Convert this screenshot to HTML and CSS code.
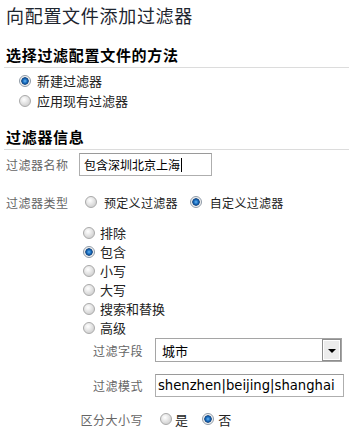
FILE: index.html
```html
<!DOCTYPE html>
<html lang="zh-CN">
<head>
<meta charset="utf-8">
<title>向配置文件添加过滤器</title>
<link rel="stylesheet" href="styles.css">
</head>
<body>
<div class="page">
  <h1 class="title">向配置文件添加过滤器</h1>

  <section class="sec">
    <h2 class="sec-head first">选择过滤配置文件的方法</h2>
    <div class="method-list">
      <div class="opt"><span class="radio on"></span><span class="opt-text">新建过滤器</span></div>
      <div class="opt"><span class="radio"></span><span class="opt-text">应用现有过滤器</span></div>
    </div>
  </section>

  <section class="sec">
    <h2 class="sec-head second">过滤器信息</h2>

    <div class="form-row name-row">
      <span class="lbl">过滤器名称</span>
      <div class="textbox name-box"><span class="tb-text">包含深圳北京上海</span><span class="caret"></span></div>
    </div>

    <div class="form-row type-row">
      <span class="lbl">过滤器类型</span>
      <div class="inline-radios">
        <span class="radio"></span><span class="ir-text">预定义过滤器</span>
        <span class="radio on gap"></span><span class="ir-text">自定义过滤器</span>
      </div>
    </div>

    <div class="type-list">
      <div class="topt"><span class="radio"></span><span class="opt-text">排除</span></div>
      <div class="topt"><span class="radio on"></span><span class="opt-text">包含</span></div>
      <div class="topt"><span class="radio"></span><span class="opt-text">小写</span></div>
      <div class="topt"><span class="radio"></span><span class="opt-text">大写</span></div>
      <div class="topt"><span class="radio"></span><span class="opt-text">搜索和替换</span></div>
      <div class="topt"><span class="radio"></span><span class="opt-text">高级</span></div>
    </div>

    <div class="adv">
      <div class="adv-row field-row">
        <span class="adv-lbl">过滤字段</span>
        <div class="select"><span class="sel-text">城市</span><span class="sel-btn"><span class="tri"></span></span></div>
      </div>
      <div class="adv-row pattern-row">
        <span class="adv-lbl">过滤模式</span>
        <div class="textbox pattern-box"><span class="pat-text">shenzhen|beijing|shanghai</span></div>
      </div>
      <div class="adv-row case-row">
        <span class="adv-lbl">区分大小写</span>
        <div class="inline-radios case-radios">
          <span class="radio"></span><span class="ir-text">是</span>
          <span class="radio on gap"></span><span class="ir-text">否</span>
        </div>
      </div>
    </div>
  </section>
</div>
</body>
</html>
```

FILE: styles.css
```css
* { box-sizing: border-box; }

html, body {
  margin: 0;
  padding: 0;
  background: #ffffff;
}

body {
  font-family: "Noto Sans CJK SC", "Noto Sans", sans-serif;
  color: #222222;
  overflow: hidden;
}

.page {
  padding: 5px 0 0 6px;
}

.title {
  margin: 0;
  font-size: 18px;
  line-height: 20px;
  height: 20px;
  font-weight: normal;
  letter-spacing: 0.7px;
  color: #1e2630;
  white-space: nowrap;
}

.sec-head {
  margin: 0 0 0 -2px;
  padding: 0 0 3px 2px;
  font-size: 15px;
  line-height: 18px;
  font-weight: bold;
  letter-spacing: 0.7px;
  color: #000000;
  border-bottom: 1px solid #dcdcdc;
  white-space: nowrap;
}

.sec-head.first { margin-top: 21px; }
.sec-head.second { margin-top: 17px; }

/* radios */
.radio {
  display: inline-block;
  flex: none;
  width: 12px;
  height: 12px;
  border-radius: 50%;
  border: 1px solid #a9a9a9;
  background: radial-gradient(circle at 40% 35%, #ffffff 0, #f2f2f2 2px, #d6d6d6 6px);
}

.radio.on {
  border-color: #8f9aa6;
  background: radial-gradient(circle at 50% 50%, #6cb6f0 0, #2a80cf 1.5px, #0c4f98 3px, #0a3f7c 3.4px, #e6e6e6 4px, #f7f7f7 5px);
}

.method-list {
  margin-top: 3px;
  padding-left: 13px;
}

.opt {
  display: flex;
  align-items: center;
  height: 20px;
}

.opt .radio { margin-right: 6px; }

.opt-text {
  font-size: 13px;
  line-height: 16px;
  color: #222222;
  white-space: nowrap;
}

/* form rows */
.form-row {
  display: flex;
  align-items: center;
}

.lbl {
  width: 73px;
  flex: none;
  font-size: 12px;
  letter-spacing: 0.5px;
  color: #666666;
  white-space: nowrap;
}

.name-row {
  margin-top: 3px;
  height: 23px;
}

.textbox {
  display: flex;
  align-items: center;
  border: 1px solid #aeaeae;
  border-top-color: #9a9a9a;
  background: #ffffff;
  overflow: hidden;
  white-space: nowrap;
}

.name-box {
  width: 133px;
  height: 23px;
  padding-left: 4px;
}

.tb-text {
  font-size: 12px;
  color: #000000;
}

.caret {
  display: inline-block;
  width: 1px;
  height: 14px;
  margin-left: 1px;
  background: #000000;
}

.type-row {
  margin-top: 16px;
  height: 20px;
}

.inline-radios {
  display: flex;
  align-items: center;
}

.type-row .inline-radios { padding-left: 6px; }

.inline-radios .radio { margin-right: 7px; }
.inline-radios .radio.gap { margin-left: 12px; margin-right: 8px; }

.ir-text {
  font-size: 12px;
  letter-spacing: 0.3px;
  color: #222222;
  white-space: nowrap;
}

.type-list {
  margin-top: 11px;
  padding-left: 77px;
}

.topt {
  display: flex;
  align-items: center;
  height: 19px;
}

.topt .radio { margin-right: 5px; }

/* advanced */
.adv-row {
  display: flex;
  align-items: center;
}

.adv-lbl {
  width: 137px;
  flex: none;
  margin-right: 12px;
  text-align: right;
  font-size: 12px;
  letter-spacing: 0.5px;
  color: #666666;
  white-space: nowrap;
}

.field-row { margin-top: 1px; height: 24px; }
.pattern-row { margin-top: 12px; height: 23px; }
.case-row { margin-top: 12px; height: 20px; }

.select {
  position: relative;
  display: flex;
  align-items: center;
  width: 187px;
  height: 24px;
  border: 1px solid #a5a5a5;
  background: #ffffff;
  padding-left: 6px;
}

.sel-text {
  font-size: 13px;
  color: #000000;
}

.sel-btn {
  position: absolute;
  right: 0;
  top: 0;
  width: 19px;
  height: 22px;
  border: 1px solid #8e8e8e;
  box-shadow: inset 0 0 0 1px #ffffff;
  background: #ececec;
  display: flex;
  align-items: center;
  justify-content: center;
}

.tri {
  width: 0;
  height: 0;
  border-left: 4px solid transparent;
  border-right: 4px solid transparent;
  border-top: 4px solid #000000;
  margin-top: 1px;
}

.pattern-box {
  width: 189px;
  height: 23px;
  padding-left: 2px;
}

.pat-text {
  font-family: "DejaVu Sans", "Liberation Sans", sans-serif;
  font-size: 13.2px;
  color: #000000;
}

.case-radios { padding-left: 5px; }
.case-radios .radio { margin-right: 3px; }
.case-radios .radio.gap { margin-left: 14px; margin-right: 4px; }
.case-radios .ir-text { font-size: 13px; }
```
